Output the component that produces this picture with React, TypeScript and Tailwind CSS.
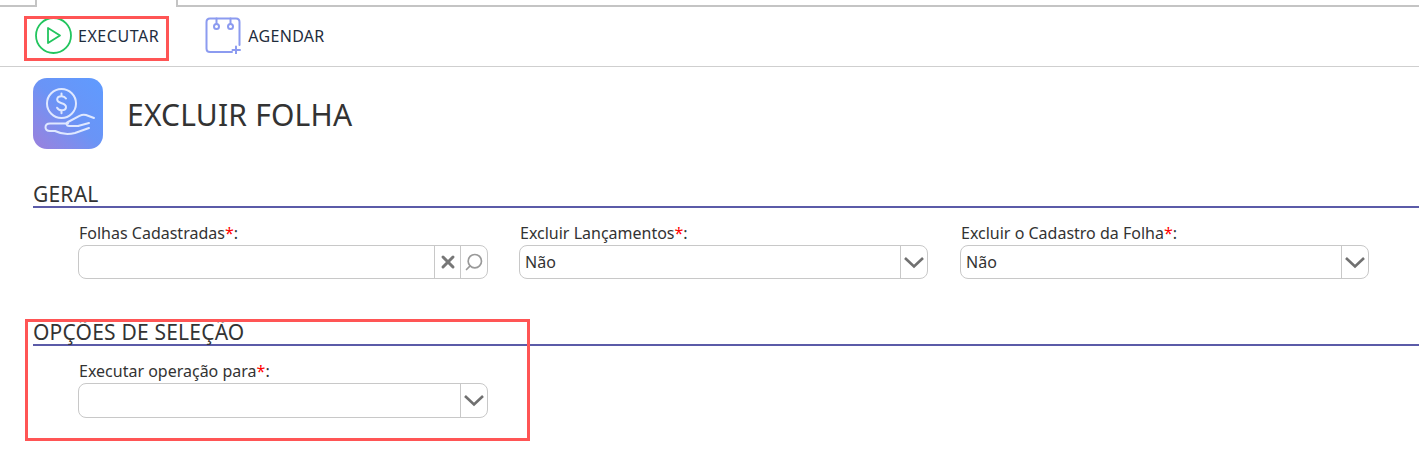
import { Search, X } from "lucide-react";

const font = { fontFamily: '"Noto Sans", Tahoma, sans-serif' };

function Label({ text }: { text: string }) {
  return (
    <div className="h-[23px] pl-[1px] text-[16px] leading-[23px] text-[#333]">
      {text}
      <span className="text-[#ff0000]">*</span>:
    </div>
  );
}

function Chevron() {
  return (
    <svg width="22" height="13" viewBox="0 0 22 13" fill="none" stroke="#707070" strokeWidth="2.600">
      <path d="M2 2l9 8.500L20 2" />
    </svg>
  );
}

function Select({ value, label, width, height }: { value?: string; label: string; width: string; height: string }) {
  return (
    <div className={width}>
      <Label text={label} />
      <div className={`flex items-stretch rounded-[8px] border border-[#c8c8c8] bg-white ${height}`}>
        <div className="flex-1 pl-[5px] text-[16px] leading-[32px] text-[#333]">{value}</div>
        <div className="flex w-[27px] items-center justify-center border-l border-[#c8c8c8]">
          <Chevron />
        </div>
      </div>
    </div>
  );
}

function SectionTitle({ text }: { text: string }) {
  return (
    <div className="ml-[33px] h-[27px] border-b-2 border-[#5b5ba8] text-[21px] leading-[26px] tracking-[0.2px] text-[#333]">{text}</div>
  );
}

function HandCoinIcon() {
  return (
    <svg width="70" height="71" viewBox="0 0 70 71" fill="none" stroke="#dfe8ff" strokeWidth="2" strokeLinecap="round" strokeLinejoin="round">
      <circle cx="28.500" cy="25.500" r="14.500" />
      <path d="M33 20.500c-1-1.600-2.800-2.300-4.500-2.300-2.400 0-4.300 1.300-4.300 3.400 0 4.700 8.800 2.600 8.800 7.300 0 2.100-2 3.400-4.500 3.400-1.800 0-3.500-.9-4.400-2.600M28.500 15.500v2.700M28.500 32.300v3" />
      <path d="M61 40l-8-3c-2.500-.8-4.500-.2-6.500.8L35 44c-2.500 1.300-1.500 4 1 4h9" />
      <path d="M45 48l11-3" />
      <path d="M35 45.500H17c-6 0-6 7.500 0 7.500h5c8 4 14 3.500 20 2l14-5" />
    </svg>
  );
}

export default function App() {
  return (
    <div className="relative h-[458px] w-[1419px] overflow-hidden bg-white" style={font}>
      {/* tab strip */}
      <div className="flex h-[7px]">
        <div className="w-[37px] border-r-2 border-b-2 border-[#c4c4c4]" />
        <div className="w-[139px]" />
        <div className="flex-1 border-b-2 border-l-2 border-[#c4c4c4]" />
      </div>

      {/* toolbar */}
      <div className="flex h-[60px] items-center border-b border-[#cfcfcf] pb-[2px]">
        <button className="ml-[35px] flex items-center gap-[6px] text-[16px] tracking-[0.55px] text-[#1f2d3d]">
          <svg width="37" height="37" viewBox="0 0 37 37" fill="none" stroke="#22c55e" strokeWidth="1.800">
            <circle cx="18.500" cy="18.500" r="17.500" />
            <path d="M13 11v15l12-7.500z" strokeLinejoin="round" />
          </svg>
          EXECUTAR
        </button>
        <button className="ml-[46px] flex items-center gap-[6px] text-[16px] tracking-[0.3px] text-[#1f2d3d]">
          <svg width="37" height="37" viewBox="0 0 37 37" fill="none" stroke="#8c9bf0" strokeWidth="2" strokeLinecap="round">
            <path d="M27 35H5c-2 0-3.500-1.500-3.500-3.500V5C1.500 3 3 1.500 5 1.500h26c2 0 3.500 1.500 3.500 3.500v23" />
            <circle cx="11.500" cy="9.500" r="2.500" />
            <circle cx="25.500" cy="9.500" r="2.500" />
            <path d="M11.500 1.500v5M25.500 1.500v5M31 29.500v7M27.500 33H35" />
          </svg>
          AGENDAR
        </button>
      </div>

      {/* title */}
      <div className="mt-[11px] ml-[33px] flex items-center gap-[24px]">
        <div className="h-[71px] w-[70px] rounded-[14px] bg-gradient-to-tr from-[#9a80dc] via-[#6a94f6] to-[#5f9bff]">
          <HandCoinIcon />
        </div>
        <h1 className="h-[71px] text-[30px] leading-[73px] tracking-[0.2px] text-[#333]">EXCLUIR FOLHA</h1>
      </div>

      {/* geral */}
      <div className="mt-[32px]">
        <SectionTitle text="GERAL" />
        <div className="mt-[14px] ml-[78px] flex gap-[31px]">
          <div className="w-[410px]">
            <Label text="Folhas Cadastradas" />
            <div className="flex h-[34px] items-stretch rounded-[8px] border border-[#c8c8c8] bg-white">
              <div className="flex-1" />
              <div className="flex w-[26px] items-center justify-center border-l border-[#c8c8c8]">
                <X size={20} strokeWidth={3.6} className="text-[#777]" />
              </div>
              <div className="flex w-[27px] items-center justify-center border-l border-[#c8c8c8]">
                <Search size={20} strokeWidth={2} className="-scale-x-100 text-[#999]" />
              </div>
            </div>
          </div>
          <Select label="Excluir Lançamentos" value="Não" width="w-[409px]" height="h-[34px]" />
          <div className="ml-[1px]">
            <Select label="Excluir o Cadastro da Folha" value="Não" width="w-[409px]" height="h-[34px]" />
          </div>
        </div>
      </div>

      {/* opções de seleção */}
      <div className="mt-[40px]">
        <SectionTitle text="OPÇÕES DE SELEÇÃO" />
        <div className="mt-[14px] ml-[78px]">
          <Select label="Executar operação para" width="w-[410px]" height="h-[35px]" />
        </div>
      </div>

      {/* marcações em vermelho sobre a tela */}
      <div className="pointer-events-none absolute top-[16px] left-[24px] h-[45px] w-[145px] border-[3px] border-[#ff5555]" />
      <div className="pointer-events-none absolute top-[319px] left-[25px] h-[122px] w-[505px] border-[3px] border-[#ff5555]" />
    </div>
  );
}
